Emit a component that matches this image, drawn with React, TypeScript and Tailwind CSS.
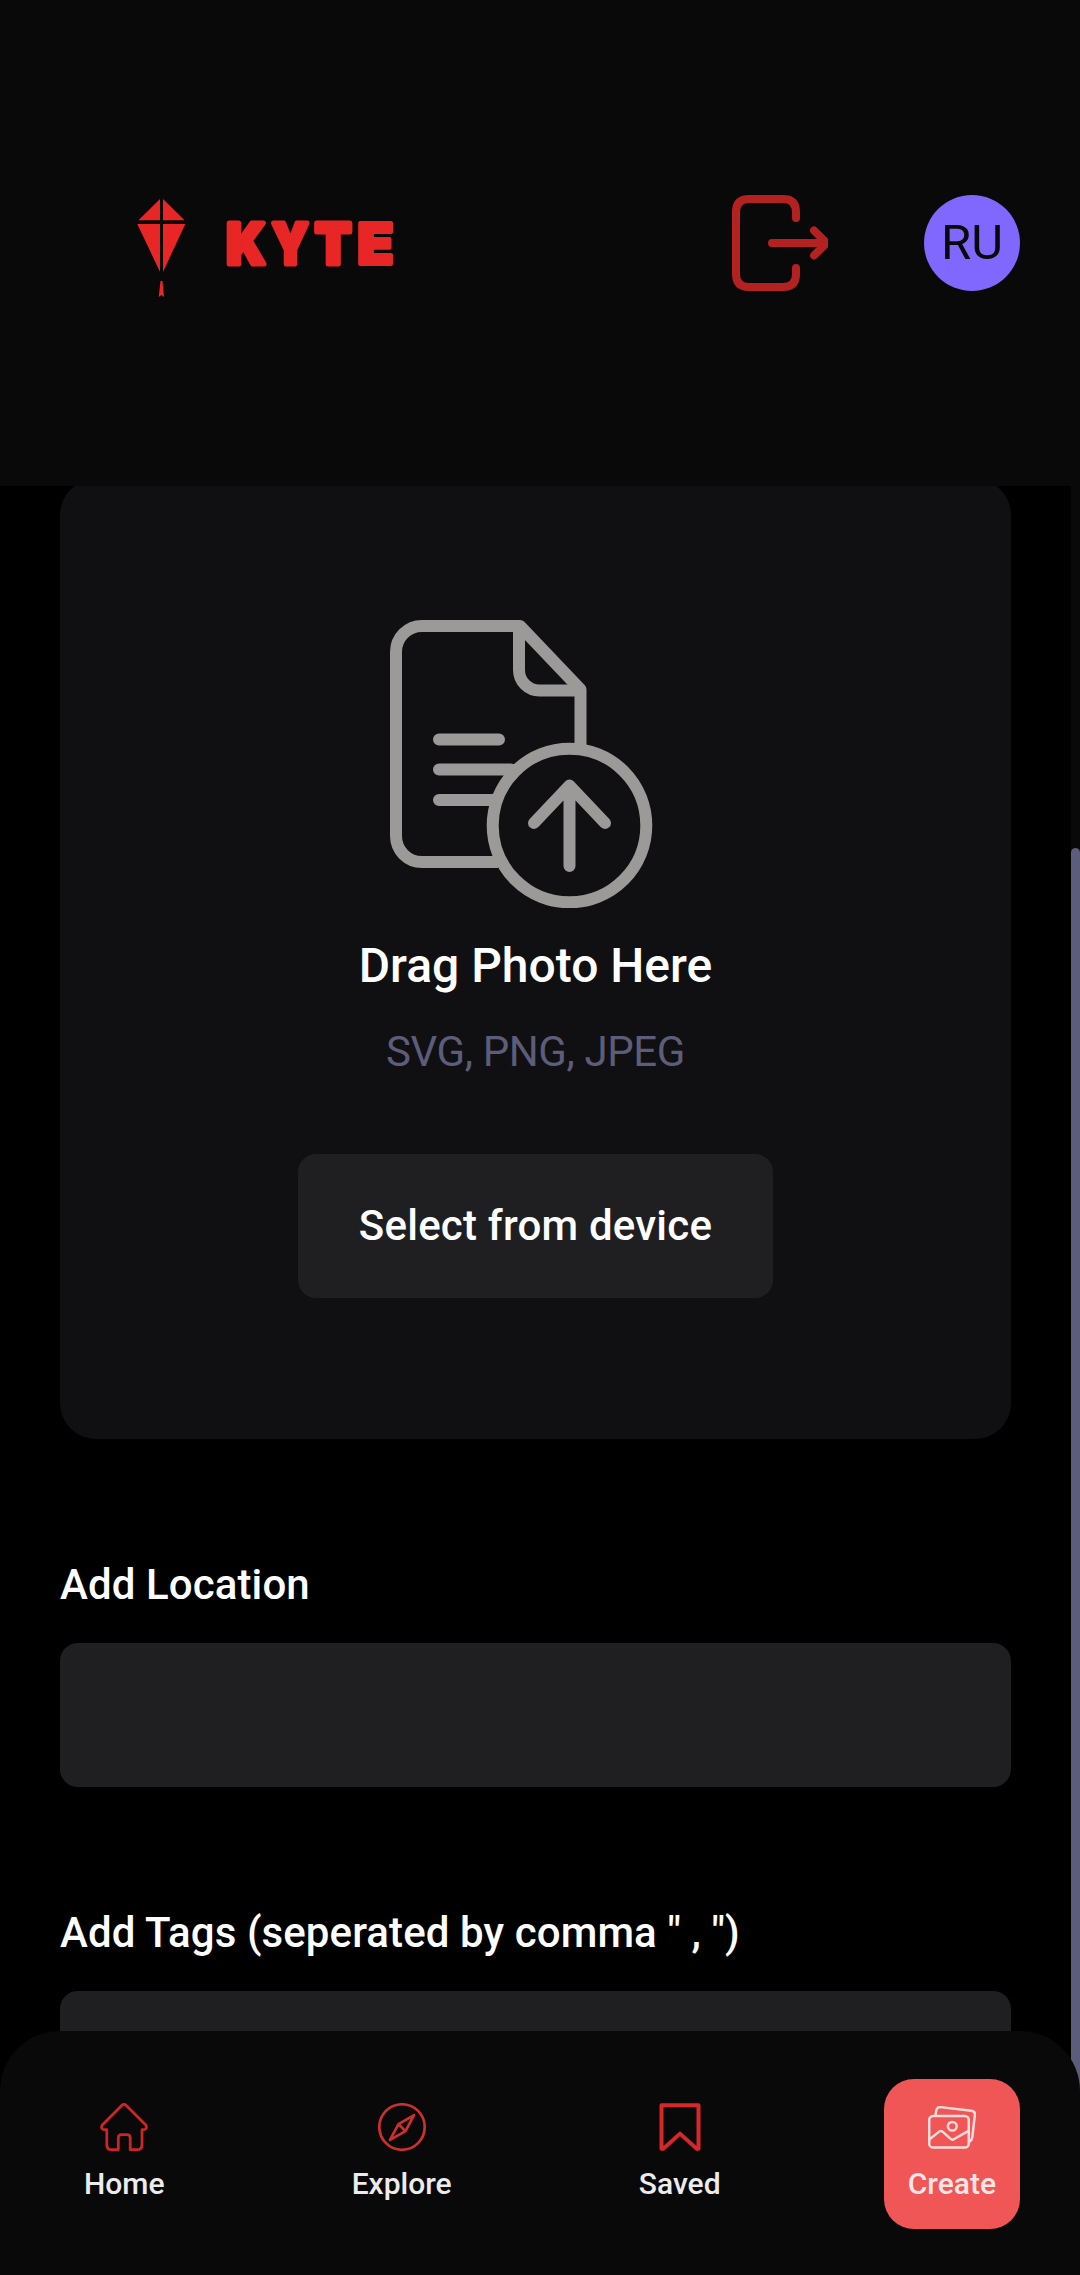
import React from "react";

function Logo() {
  return (
    <svg width="260" height="100" viewBox="0 0 260 100" fill="#e82626" aria-label="KYTE">
      <path d="M23 0V21.3H1.5zM26 0V21.3H47.5zM.3 25H23V73zM26 25H48.3L26 73zM23.5 82H25.5L27 98L24.5 96L21.7 98z" />
      <g
        fontFamily="Inter, sans-serif"
        fontWeight="900"
        fontSize="57"
        stroke="#e82626"
        strokeWidth="5"
        strokeLinejoin="round"
      >
        <text transform="translate(89.500 64.500)" textLength="39" lengthAdjust="spacingAndGlyphs">K</text>
        <text transform="translate(135 64.500)" textLength="36.500" lengthAdjust="spacingAndGlyphs">Y</text>
        <text transform="translate(178 64.500)" textLength="36.500" lengthAdjust="spacingAndGlyphs">T</text>
        <text transform="translate(220.500 64.500)" textLength="36" lengthAdjust="spacingAndGlyphs" strokeWidth="4">E</text>
      </g>
    </svg>
  );
}

function LogoutIcon() {
  return (
    <svg width="96" height="96" viewBox="0 0 96 96" fill="none" stroke="#b32121" strokeWidth="8" strokeLinecap="round">
      <path d="M64 23V17Q64 4 51 4H17Q4 4 4 17V79Q4 92 17 92H51Q64 92 64 79V73" />
      <path d="M40 48H92M82 35.5L94.500 48L82 60.500" strokeLinejoin="round" />
    </svg>
  );
}

function UploadIcon() {
  return (
    <svg className="mr-7" width="263" height="288" viewBox="0 0 263 288" fill="none" stroke="#9b9a98" strokeWidth="12" strokeLinecap="round" strokeLinejoin="round">
      <path strokeLinecap="butt" d="M108 242H32A26 26 0 0 1 6 216V32A26 26 0 0 1 32 6H130L190.500 69.500V127" />
      <path d="M129 8V50A20.500 20.500 0 0 0 149.500 70.500H189M49 119.500H109M49 149.500H121M49 180H103" />
      <circle cx="179.500" cy="205.500" r="76.800" />
      <path d="M179.500 166V246M144 203L179.500 165.500L215 203" />
    </svg>
  );
}

function HomeIcon() {
  return (
    <svg width="48" height="48" viewBox="0 0 48 49" preserveAspectRatio="none" fill="none" stroke="#cb2525" strokeWidth="2.800" strokeLinejoin="round">
      <path d="M22 2.300Q24 .4 26 2.300L45.800 22.500Q47.600 26.800 43.500 27.300H42V42.500Q42 47.600 37 47.600H30.200V35.500Q30.200 32.200 27 32.200H21.500Q18.300 32.200 18.300 35.500V47.600H11.500Q6.800 47.600 6.800 42.500V27.300H4.500Q.4 26.800 2.200 22.500Z" />
    </svg>
  );
}

function ExploreIcon() {
  return (
    <svg width="48" height="48" viewBox="0 0 48 49" preserveAspectRatio="none" fill="none" stroke="#cb3030" strokeWidth="2.700" strokeLinejoin="round">
      <ellipse cx="24" cy="24.500" rx="22.700" ry="23.200" />
      <path d="M36 12.300L20.500 21.500L12 37.700L27.500 28.800ZM20.500 21.500L27.500 28.800" />
    </svg>
  );
}

function SavedIcon() {
  return (
    <svg width="48" height="48" viewBox="0 0 48 49" preserveAspectRatio="none" fill="none" stroke="#d62828" strokeWidth="4" strokeLinejoin="round">
      <path d="M5.500 2.300H42.500V46.800H40.800L24 31.300L7.200 46.800H5.500Z" />
    </svg>
  );
}

function CreateIcon() {
  return (
    <svg width="48" height="48" viewBox="0 0 48 49" preserveAspectRatio="none" fill="none" stroke="#fbdddd" strokeWidth="2.500" strokeLinecap="round" strokeLinejoin="round">
      <rect x="1.200" y="13.200" width="39.600" height="32.300" rx="4" />
      <path d="M7.500 12.500L8.300 7.500Q9 4 12.500 4.200L43.500 7.900Q47.200 8.500 46.900 12L44.300 35Q43.800 38.300 41.500 39.500" />
      <circle cx="24.300" cy="23.700" r="4.400" />
      <path d="M1.500 37L11.200 29.200Q13 28 14.800 29.500L23 36.800Q24.500 38 26.200 36.800L40.500 28.500" />
    </svg>
  );
}

const tabs = [
  { label: "Home", Icon: HomeIcon, active: false },
  { label: "Explore", Icon: ExploreIcon, active: false },
  { label: "Saved", Icon: SavedIcon, active: false },
  { label: "Create", Icon: CreateIcon, active: true },
];

function Field({ label }: { label: string }) {
  return (
    <div className="flex flex-col gap-[33px]">
      <label className="text-[42px] leading-[50px] font-medium tracking-[0.1px] text-white">{label}</label>
      <div className="h-36 rounded-[18px] bg-[#1f1f21]" />
    </div>
  );
}

export default function App() {
  return (
    <div className="flex h-[2275px] w-[1080px] flex-col overflow-hidden bg-black font-['Roboto',sans-serif]">
      <header className="z-10 flex h-[486px] shrink-0 items-center justify-between bg-[#09090a] pr-[60px] pl-[137px]">
        <div className="pt-3">
          <Logo />
        </div>
        <div className="flex items-center gap-24">
          <LogoutIcon />
          <div className="flex size-24 items-center justify-center rounded-full bg-[#8068ff] pb-0.5 text-[49px] leading-none text-[#09090a]">
            RU
          </div>
        </div>
      </header>

      <div className="flex h-[1545px] shrink-0 justify-between">
        <main className="-mt-[7px] ml-[60px] flex w-[951px] flex-col">
          <section className="flex h-[960px] shrink-0 flex-col items-center rounded-[36px] bg-[#101012] pt-[141px]">
            <UploadIcon />
            <h3 className="mt-[26px] text-[48px] leading-[64px] font-medium text-white">Drag Photo Here</h3>
            <p className="mt-6 text-[42px] leading-[60px] tracking-[-0.4px] text-[#5c5c7b]">SVG, PNG, JPEG</p>
            <button className="mt-[72px] h-36 w-[475px] rounded-[18px] bg-[#1f1f21] pb-0.5 text-[42px] font-medium tracking-[0.22px] text-white">
              Select from device
            </button>
          </section>
          <div className="mt-[121px] flex flex-col gap-[121px]">
            <Field label="Add Location" />
            <Field label={'Add Tags (seperated by comma " , ")'} />
          </div>
        </main>
        <div className="flex h-[1789px] w-[9px] shrink-0 flex-col bg-[#09090a] pt-[362px]">
          <div className="grow rounded-full bg-[#5c5c7b]" />
        </div>
      </div>

      <nav className="z-10 flex h-[244px] shrink-0 items-start justify-between rounded-t-[60px] bg-[#09090a] px-[60px] pt-12">
        {tabs.map(({ label, Icon, active }) => (
          <div
            key={label}
            className={
              "flex h-[150px] flex-col items-center rounded-[30px] px-6 pt-6 " + (active ? "bg-[#f05656]" : "")
            }
          >
            <Icon />
            <span
              className={"mt-[13px] text-[30px] leading-[40px] font-medium " + (active ? "text-[#fbe6e6]" : "text-[#ececec]")}
            >
              {label}
            </span>
          </div>
        ))}
      </nav>
    </div>
  );
}
